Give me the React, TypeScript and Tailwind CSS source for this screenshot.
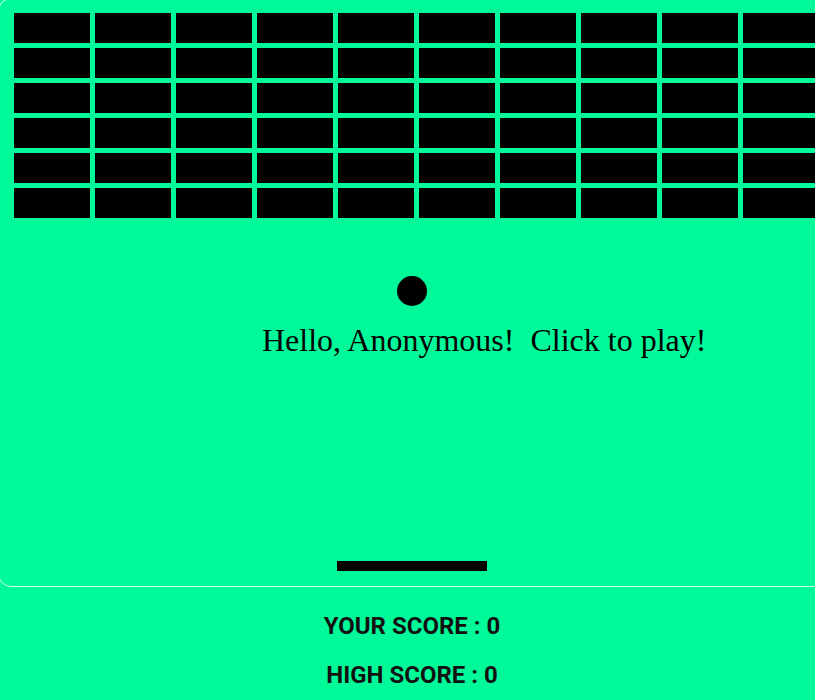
import React from "react";

export default function App() {
  const rows = 6;
  const cols = 10;
  const bricks = Array.from({ length: rows * cols });
  return (
    <div className="w-[815px] h-[700px] overflow-hidden bg-[#00fa9a]">
      <div className="-ml-[2px] -mt-[2px] w-[828px]">
        <div className="box-border h-[589px] w-[828px] rounded-[13px] border border-[#d8fbe9] flex flex-col">
          <div className="grid grid-cols-[repeat(10,76px)] gap-[5px] pl-[15px] pt-[14px]">
            {bricks.map((_, i) => (
              <div key={i} className="h-[30px] w-[76px] bg-black" />
            ))}
          </div>
          <div className="mx-auto mt-[58px] h-[30px] w-[30px] rounded-full bg-black" />
          <div
            className="ml-[263px] mt-[16px] whitespace-pre text-[32px] leading-[36px] text-black"
            style={{ fontFamily: '"Liberation Serif", "Times New Roman", serif' }}
          >
            {"Hello, Anonymous!  Click to play!"}
          </div>
          <div className="mx-auto mt-auto mb-[15px] h-[10px] w-[150px] bg-black" />
        </div>
        <div
          className="flex flex-col items-center gap-[21px] pt-[25px] text-[24px] font-bold leading-[28px] text-[#111]"
          style={{ fontFamily: "Roboto, Arial, sans-serif" }}
        >
          <div>YOUR SCORE : 0</div>
          <div>HIGH SCORE : 0</div>
        </div>
      </div>
    </div>
  );
}
